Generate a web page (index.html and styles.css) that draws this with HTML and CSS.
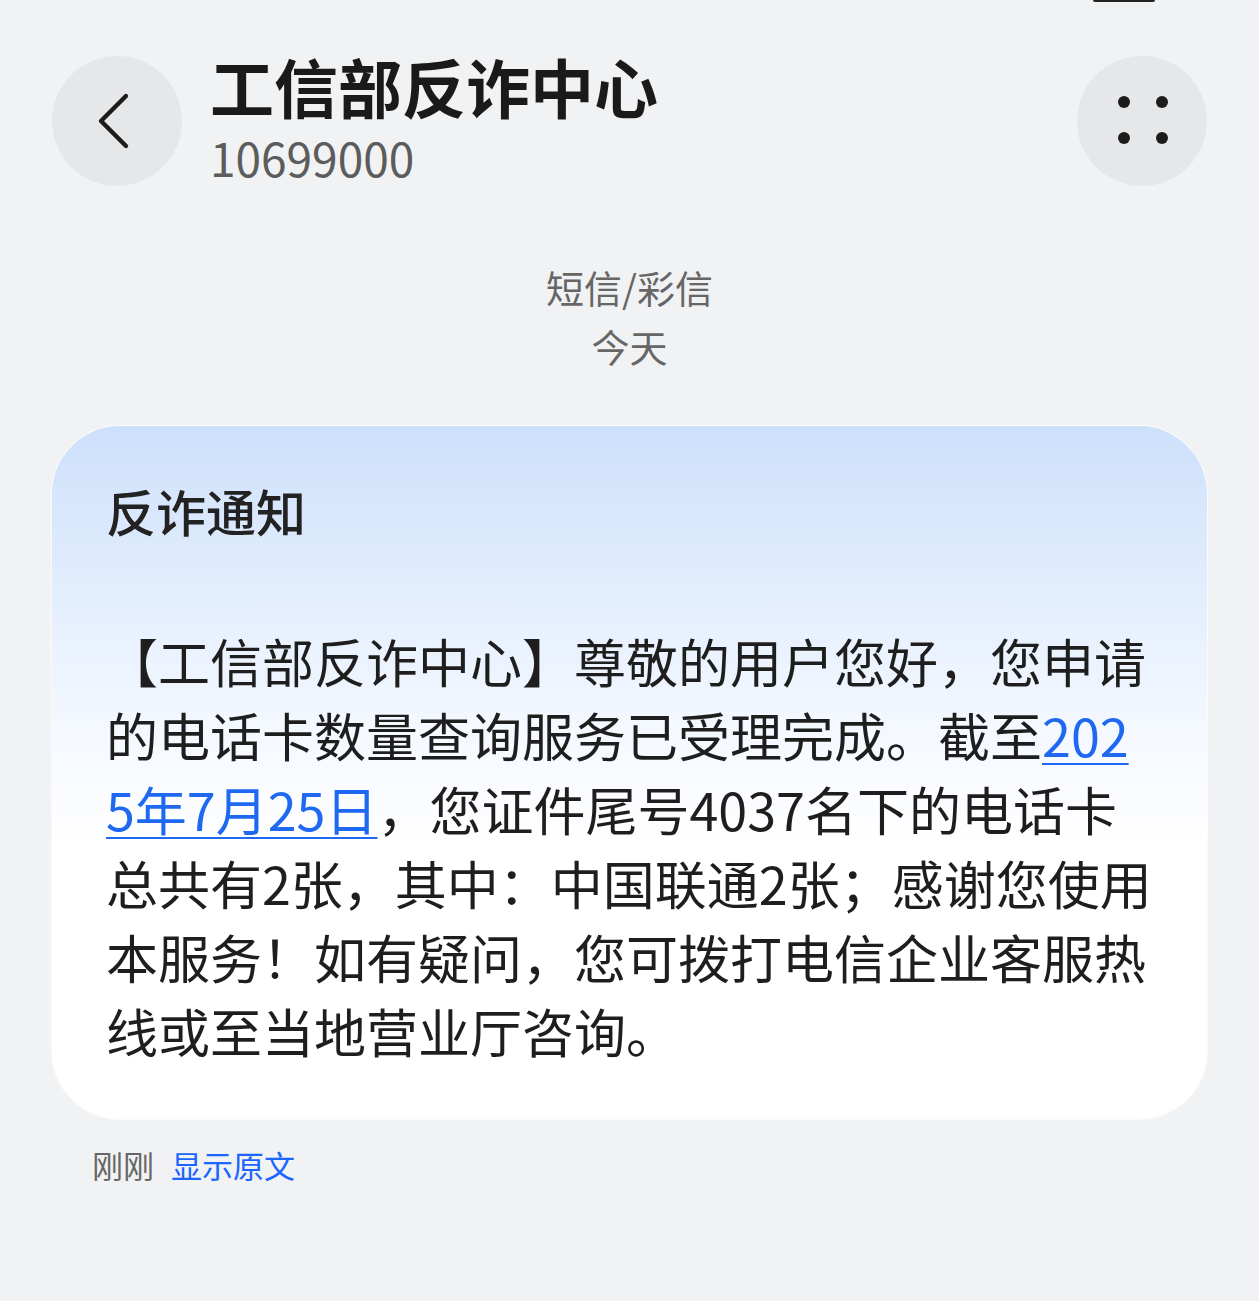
FILE: index.html
```html
<!DOCTYPE html>
<html lang="zh-CN">
<head>
  <meta charset="UTF-8">
  <meta name="viewport" content="width=device-width, initial-scale=1.0">
  <title>工信部反诈中心</title>
  <link rel="stylesheet" href="styles.css">
</head>
<body>
<div class="status-mark"></div>
<div class="page">
  <div class="top-bar">
    <button class="round-btn" aria-label="返回">
      <svg width="40" height="60" viewBox="0 0 40 60">
        <path d="M29 5 L4 30 L29 55" fill="none" stroke="#1c1c1c" stroke-width="4.4" stroke-linecap="round" stroke-linejoin="round"/>
      </svg>
    </button>
    <div class="sender">
      <div class="sender-name">工信部反诈中心</div>
      <div class="sender-num">10699000</div>
    </div>
    <button class="round-btn" aria-label="更多">
      <svg width="60" height="60" viewBox="0 0 60 60">
        <circle cx="12" cy="11" r="6" fill="#1c1c1c"/>
        <circle cx="50" cy="11" r="6" fill="#1c1c1c"/>
        <circle cx="12" cy="47" r="6" fill="#1c1c1c"/>
        <circle cx="50" cy="47" r="6" fill="#1c1c1c"/>
      </svg>
    </button>
  </div>

  <div class="thread-info">
    <div>短信/彩信</div>
    <div>今天</div>
  </div>

  <div class="msg-card">
    <div class="msg-title">反诈通知</div>
    <div class="msg-body">【工信部反诈中心】尊敬的用户您好，您申请的电话卡数量查询服务已受理完成。截至<a href="#" class="date-link">2025年7月25日</a>，您证件尾号4037名下的电话卡总共有2张，其中：中国联通2张；感谢您使用本服务！如有疑问，您可拨打电信企业客服热线或至当地营业厅咨询。</div>
  </div>

  <div class="msg-meta">
    <span class="msg-time">刚刚</span>
    <a href="#" class="show-orig">显示原文</a>
  </div>
</div>
</body>
</html>
```

FILE: styles.css
```css
body {
  font-family: "Noto Sans CJK SC", "Noto Sans", sans-serif;
  background: #f1f2f4;
  color: #1e1e1e;
  margin: 0;
  padding: 0;
}
.status-mark {
  position: absolute;
  top: 0;
  left: 1093px;
  width: 62px;
  height: 2px;
  border-radius: 0 0 2px 2px;
  background: #222;
}
.page {
  padding: 56px 52px 0 52px;
}
.top-bar {
  display: flex;
  align-items: center;
  gap: 28px;
  height: 130px;
}
.round-btn {
  width: 130px;
  height: 130px;
  border-radius: 50%;
  border: none;
  padding: 0;
  background: #e6e7e9;
  display: flex;
  align-items: center;
  justify-content: center;
  flex-shrink: 0;
}
.sender {
  flex: 1;
}
.sender-name {
  font-size: 64px;
  font-weight: bold;
  line-height: 72px;
  color: #1a1a1a;
}
.sender-num {
  font-size: 46px;
  line-height: 72px;
  color: #5c5c5c;
}
.thread-info {
  margin-top: 71px;
  text-align: center;
  font-size: 38px;
  line-height: 59px;
  color: #666;
}
.msg-card {
  margin-top: 51px;
  padding: 54px 52px 51px 54px;
  border-radius: 68px;
  background: linear-gradient(to bottom, #cde0fb 0, #e3eefd 170px, #f4f8ff 300px, #ffffff 420px);
  box-shadow: 0 0 0 1px rgba(255, 255, 255, 0.7);
}
.msg-title {
  font-size: 50px;
  font-weight: 500;
  line-height: 60px;
  color: #222;
}
.msg-body {
  margin-top: 84px;
  font-size: 52px;
  line-height: 74px;
  word-break: break-all;
  color: #1e1e1e;
}
.date-link {
  color: #1f69f2;
  text-decoration: underline;
  text-decoration-thickness: 2px;
  text-underline-offset: 6px;
}
.msg-meta {
  margin-top: 26px;
  padding-left: 40px;
  display: flex;
  gap: 17px;
  font-size: 31px;
  line-height: 40px;
}
.msg-time {
  color: #666;
}
.show-orig {
  color: #1a66ff;
  text-decoration: none;
}
```
